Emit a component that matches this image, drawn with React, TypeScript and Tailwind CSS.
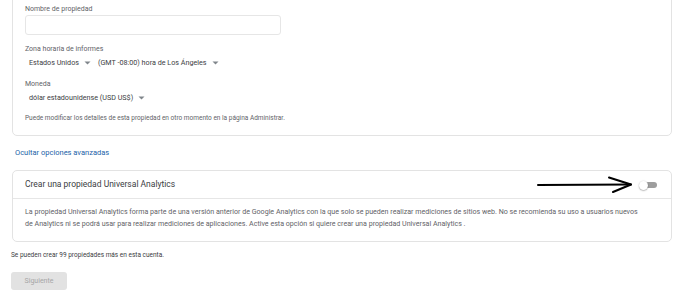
import React from "react";

function Caret() {
  return (
    <svg width="7" height="4" viewBox="0 0 7 4" className="ml-[5px] inline-block">
      <path d="M0.5 0.5 L3.5 3.5 L6.5 0.5 Z" fill="#80868b" />
    </svg>
  );
}

export default function App() {
  return (
    <div
      className="relative w-[690px] h-[297px] overflow-hidden bg-white text-[#3c4043]"
      style={{ fontFamily: "Roboto, 'Liberation Sans', sans-serif" }}
    >
      {/* property details card */}
      <div className="ml-[12px] mt-[-10px] w-[660px] h-[146px] rounded-[5px] border border-[#e3e3e3] px-[12px] pt-[14px]">
        <div className="text-[7px] leading-[9px] text-[#5f6368]">Nombre de propiedad</div>
        <div className="mt-[1px] w-[256px] h-[20px] rounded-[3px] border border-[#e6e6e6]" />

        <div className="mt-[10px] text-[7px] leading-[9px] text-[#5f6368]">Zona horaria de informes</div>
        <div className="mt-[4px] flex items-center pl-[4px] text-[7.2px] leading-[10px] text-[#3c4043]">
          <span className="flex items-center">
            Estados Unidos
            <Caret />
          </span>
          <span className="ml-[7px] flex items-center">
            (GMT -08:00) hora de Los Ángeles
            <Caret />
          </span>
        </div>

        <div className="mt-[12px] text-[7px] leading-[9px] text-[#5f6368]">Moneda</div>
        <div className="mt-[4px] flex items-center pl-[4px] text-[7.2px] leading-[10px] text-[#3c4043]">
          dólar estadounidense (USD US$)
          <Caret />
        </div>

        <div className="mt-[11px] text-[6.5px] leading-[9px] text-[#5f6368]">
          Puede modificar los detalles de esta propiedad en otro momento en la página Administrar.
        </div>
      </div>

      <div className="ml-[15px] mt-[12px] text-[7.5px] leading-[10px] text-[#1a5fa8]">
        Ocultar opciones avanzadas
      </div>

      {/* universal analytics card */}
      <div className="ml-[12px] mt-[12px] w-[660px] rounded-[5px] border border-[#e3e3e3]">
        <div className="flex h-[28px] items-center justify-between border-b border-[#e6e6e6] px-[12px]">
          <span className="text-[8.5px] text-[#3c4043]">Crear una propiedad Universal Analytics</span>
          <div className="relative mr-[1px] flex h-[10px] w-[19px] items-center">
            <div className="ml-[4px] h-[6px] w-[14px] rounded-full bg-[#9e9e9e]" />
            <div className="absolute left-0 top-[1px] h-[9px] w-[9px] rounded-full bg-white shadow-[0_0.5px_1.5px_rgba(0,0,0,0.45)]" />
          </div>
        </div>
        <div className="pl-[12px] pr-[6px] pt-[7px] pb-[11px] text-[7.1px] leading-[12px] text-[#5f6368]">
          La propiedad Universal Analytics forma parte de una versión anterior de Google Analytics con la que solo se pueden realizar mediciones de sitios web. No se recomienda su uso a usuarios nuevos
          <br />
          de Analytics ni se podrá usar para realizar mediciones de aplicaciones. Active esta opción si quiere crear una propiedad Universal Analytics .
        </div>
      </div>

      <div className="ml-[11px] mt-[9px] text-[6.5px] leading-[9px] text-[#3c4043]">
        Se pueden crear 99 propiedades más en esta cuenta.
      </div>

      <button className="ml-[11px] mt-[12px] flex h-[18px] w-[56px] items-center justify-center rounded-[3px] bg-[#e2e2e2] text-[7px] text-[#a6a6a6]">
        Siguiente
      </button>

      {/* annotation arrow */}
      <svg className="absolute left-[536px] top-[174px]" width="100" height="22" viewBox="0 0 100 22">
        <path d="M2 11 L95 10.5" stroke="#000" strokeWidth="2" fill="none" strokeLinecap="round" />
        <path d="M73 3.5 L95 10.5 L77 18" stroke="#000" strokeWidth="2" fill="none" strokeLinecap="round" strokeLinejoin="round" />
      </svg>
    </div>
  );
}
